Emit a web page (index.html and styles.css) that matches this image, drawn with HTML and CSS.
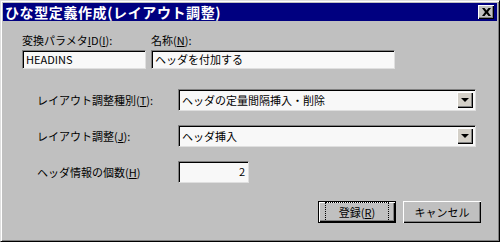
FILE: index.html
```html
<!DOCTYPE html>
<html lang="ja">
<head>
    <meta charset="UTF-8">
    <title>ひな型定義作成(レイアウト調整)</title>
    <link rel="stylesheet" href="styles.css">
</head>
<body>
    <div class="window">
        <div class="titlebar">
            <span class="title">ひな型定義作成(レイアウト調整)</span>
            <span class="close-btn">
                <svg width="9" height="8" viewBox="0 0 9 8">
                    <path d="M0 0h2.5l2 2.5 2-2.5h2.5l-3 4 3 4h-2.5l-2-2.5-2 2.5h-2.5l3-4z" fill="#000"/>
                </svg>
            </span>
        </div>

        <div class="content">
            <!-- top pair of edit boxes -->
            <div class="top-fields">
                <div class="field id-field">
                    <label>変換パラメタ<u>I</u>D(<u>I</u>):</label>
                    <div class="edit">HEADINS</div>
                </div>
                <div class="field name-field">
                    <label>名称(<u>N</u>):</label>
                    <div class="edit">ヘッダを付加する</div>
                </div>
            </div>

            <div class="form-rows">
                <div class="form-row">
                    <label>レイアウト調整種別(<u>T</u>):</label>
                    <div class="combo">
                        <span class="combo-text">ヘッダの定量間隔挿入・削除</span>
                        <span class="combo-btn"><span class="arrow"></span></span>
                    </div>
                </div>
                <div class="form-row">
                    <label>レイアウト調整(<u>J</u>):</label>
                    <div class="combo">
                        <span class="combo-text">ヘッダ挿入</span>
                        <span class="combo-btn"><span class="arrow"></span></span>
                    </div>
                </div>
                <div class="form-row">
                    <label>ヘッダ情報の個数(<u>H</u>)</label>
                    <div class="edit number">2</div>
                </div>
            </div>

            <div class="buttons">
                <div class="btn default"><span class="focus">登録(<u>R</u>)</span></div>
                <div class="btn">キャンセル</div>
            </div>
        </div>
    </div>
</body>
</html>
```

FILE: styles.css
```css
* {
    margin: 0;
    padding: 0;
    box-sizing: border-box;
}

body {
    width: 500px;
    height: 242px;
    overflow: hidden;
    font-family: "Noto Sans CJK JP", "DejaVu Sans", sans-serif;
    font-size: 11px;
    color: #000;
    background-color: #c0c0c0;
}

u {
    text-decoration: underline;
}

.window {
    width: 500px;
    height: 242px;
    display: flex;
    flex-direction: column;
    background-color: #c0c0c0;
    border-top: 1px solid #dfdfdf;
    border-left: 1px solid #dfdfdf;
    border-right: 1px solid #000;
    border-bottom: 1px solid #000;
    box-shadow: inset 1px 1px 0 #fff, inset -1px -1px 0 #808080;
    padding: 2px;
}

.titlebar {
    height: 18px;
    background-color: #000080;
    display: flex;
    align-items: center;
    justify-content: space-between;
    padding: 0 3px 0 2px;
}

.title {
    color: #fff;
    font-weight: bold;
    font-size: 14px;
    line-height: 18px;
    letter-spacing: 0.6px;
}

.close-btn {
    width: 16px;
    height: 14px;
    background-color: #c0c0c0;
    display: flex;
    align-items: center;
    justify-content: center;
    box-shadow: inset 1px 1px 0 #fff, inset -1px -1px 0 #000, inset -2px -2px 0 #808080;
}

.content {
    flex: 1;
    display: flex;
    flex-direction: column;
    padding: 12px 0 0 19px;
}

.top-fields {
    display: flex;
    gap: 5px;
}

.field {
    display: flex;
    flex-direction: column;
    gap: 3px;
}

.field label {
    line-height: 14px;
}

.id-field .edit {
    width: 124px;
}

.name-field .edit {
    width: 244px;
}

.edit {
    height: 19px;
    background-color: #f8f8f8;
    line-height: 17px;
    padding: 0 3px;
    border-top: 1px solid #808080;
    border-left: 1px solid #808080;
    border-right: 1px solid #dfdfdf;
    border-bottom: 1px solid #dfdfdf;
    box-shadow: inset 1px 1px 0 #000;
}

.form-rows {
    display: flex;
    flex-direction: column;
    gap: 14px;
    padding: 20px 0 0 15px;
}

.form-row {
    display: flex;
    align-items: center;
}

.form-row label {
    width: 141px;
}

.combo {
    width: 298px;
    height: 22px;
    display: flex;
    align-items: center;
    background-color: #f8f8f8;
    padding: 2px;
    border-top: 1px solid #808080;
    border-left: 1px solid #808080;
    border-right: 1px solid #dfdfdf;
    border-bottom: 1px solid #dfdfdf;
    box-shadow: inset 1px 1px 0 #000;
}

.combo-text {
    flex: 1;
    padding-left: 1px;
}

.combo-btn {
    width: 16px;
    height: 16px;
    background-color: #d4d0c8;
    display: flex;
    align-items: center;
    justify-content: center;
    box-shadow: inset 1px 1px 0 #fff, inset -1px -1px 0 #000, inset -2px -2px 0 #808080;
}

.arrow {
    width: 0;
    height: 0;
    border-left: 4px solid transparent;
    border-right: 4px solid transparent;
    border-top: 4px solid #000;
}

.edit.number {
    width: 71px;
    height: 22px;
    line-height: 19px;
    text-align: right;
}

.buttons {
    display: flex;
    justify-content: flex-end;
    gap: 7px;
    margin-top: auto;
    padding: 0 16px 16px 0;
}

.btn {
    width: 78px;
    height: 22px;
    display: flex;
    align-items: center;
    justify-content: center;
    background-color: #c0c0c0;
    box-shadow: inset 1px 1px 0 #fff, inset -1px -1px 0 #000, inset -2px -2px 0 #808080;
}

.btn.default {
    border: 1px solid #000;
}

.focus {
    padding: 0 12px;
    outline: 1px dotted #000;
    outline-offset: 1px;
}
```
